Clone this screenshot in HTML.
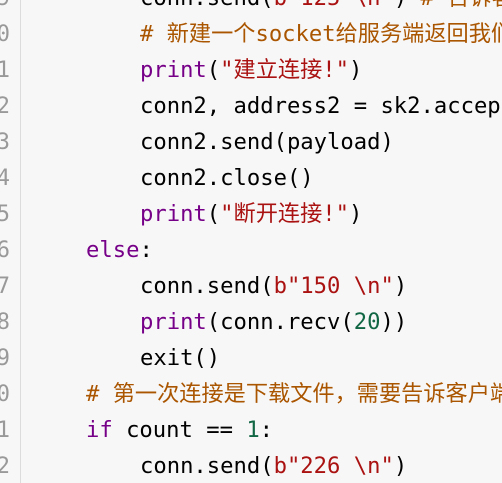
<!DOCTYPE html>
<html><head><meta charset="utf-8"><style>
html,body{margin:0;padding:0;width:502px;height:483px;overflow:hidden;background:#f7f7f7;}
.w{position:absolute;left:0;top:0;width:502px;height:483px;overflow:hidden;}
.g{position:absolute;left:0;top:0;width:20px;height:483px;border-right:1px solid #dcdcdc;background:#f7f7f7;}
.l{position:absolute;left:0;width:502px;overflow:hidden;height:36px;line-height:36px;white-space:pre;font-family:"DejaVu Sans Mono","Noto Sans CJK SC",monospace;font-size:22.2px;color:#000;}
.n{position:absolute;left:-30px;width:40px;text-align:right;color:#999;}
.c{position:absolute;}
.k{color:#770088}.s{color:#aa1111}.m{color:#aa5500}.d{color:#116644}
</style></head><body><div class="w">
<div class="g"></div>
<div class="l" style="top:-20px"><span class="n">9</span><span class="c" style="left:140px">conn.send(<span class="s">b"125 \n"</span>) <span class="m"># 告诉客户端</span></span></div>
<div class="l" style="top:16px"><span class="n">0</span><span class="c m" style="left:140px"># 新建一个socket给服务端返回我们</span></div>
<div class="l" style="top:52px"><span class="n">1</span><span class="c" style="left:140px"><span class="k">print</span>(<span class="s">"建立连接!"</span>)</span></div>
<div class="l" style="top:88px"><span class="n">2</span><span class="c" style="left:140px">conn2, address2 = sk2.accept()</span></div>
<div class="l" style="top:124px"><span class="n">3</span><span class="c" style="left:140px">conn2.send(payload)</span></div>
<div class="l" style="top:160px"><span class="n">4</span><span class="c" style="left:140px">conn2.close()</span></div>
<div class="l" style="top:196px"><span class="n">5</span><span class="c" style="left:140px"><span class="k">print</span>(<span class="s">"断开连接!"</span>)</span></div>
<div class="l" style="top:232px"><span class="n">6</span><span class="c" style="left:86px"><span class="k">else</span>:</span></div>
<div class="l" style="top:268px"><span class="n">7</span><span class="c" style="left:140px">conn.send(<span class="s">b"150 \n"</span>)</span></div>
<div class="l" style="top:304px"><span class="n">8</span><span class="c" style="left:140px"><span class="k">print</span>(conn.recv(<span class="d">20</span>))</span></div>
<div class="l" style="top:340px"><span class="n">9</span><span class="c" style="left:140px">exit()</span></div>
<div class="l" style="top:376px"><span class="n">0</span><span class="c m" style="left:86px"># 第一次连接是下载文件，需要告诉客户端</span></div>
<div class="l" style="top:412px"><span class="n">1</span><span class="c" style="left:86px"><span class="k">if</span> count == <span class="d">1</span>:</span></div>
<div class="l" style="top:448px"><span class="n">2</span><span class="c" style="left:140px">conn.send(<span class="s">b"226 \n"</span>)</span></div>
</div></body></html>
